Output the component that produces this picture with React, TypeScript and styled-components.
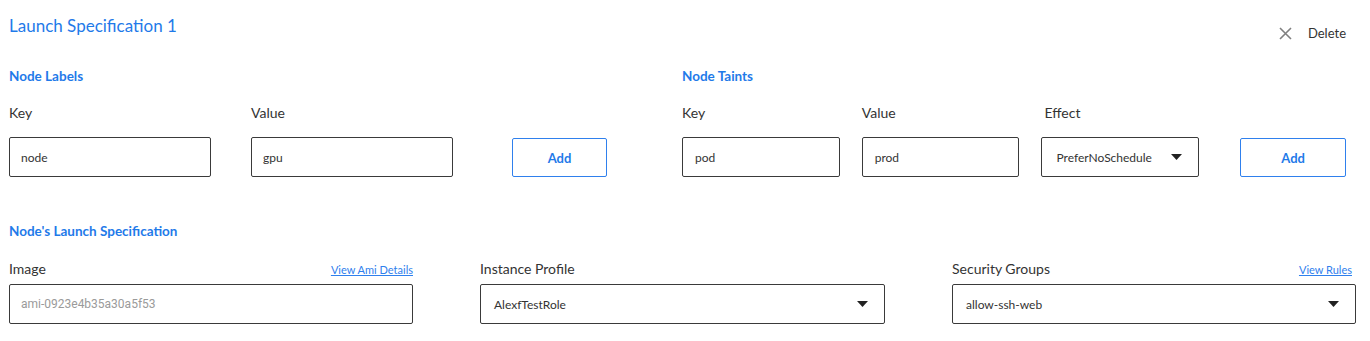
import React from 'react';
import styled, { createGlobalStyle } from 'styled-components';

const GlobalStyle = createGlobalStyle`
  body {
    margin: 0;
    background: #ffffff;
    font-family: 'Lato', 'Liberation Sans', sans-serif;
    color: #333333;
  }
`;

const Page = styled.div`
  padding: 14px 15px 0 9px;
`;

const Header = styled.div`
  display: flex;
  justify-content: space-between;
  align-items: flex-start;
  height: 38px;
  padding-right: 9px;
`;

const Title = styled.h1`
  margin: 0;
  font-size: 17px;
  line-height: 24px;
  font-weight: 400;
  color: #1f7ae9;
`;

const DeleteButton = styled.button`
  display: flex;
  align-items: center;
  gap: 16px;
  margin-top: 10px;
  padding: 0;
  border: none;
  background: none;
  font-family: inherit;
  font-size: 13px;
  line-height: 18px;
  color: #333333;
  cursor: pointer;
`;

const TopRow = styled.div`
  display: flex;
  margin-top: 16px;
`;

const Group = styled.section<{ $w: number; $ml?: number }>`
  width: ${p => p.$w}px;
  margin-left: ${p => p.$ml || 0}px;
`;

const SectionTitle = styled.h2`
  margin: 0;
  font-size: 13.5px;
  line-height: 16px;
  font-weight: 700;
  color: #1f7ae9;
`;

const Fields = styled.div<{ $gap: number }>`
  display: flex;
  align-items: flex-end;
  gap: ${p => p.$gap}px;
  margin-top: 20px;
`;

const Field = styled.div<{ $w: number }>`
  width: ${p => p.$w}px;
  display: flex;
  flex-direction: column;
`;

const LabelRow = styled.div<{ $mb: number }>`
  display: flex;
  justify-content: space-between;
  align-items: baseline;
  margin-bottom: ${p => p.$mb}px;
`;

const Label = styled.label<{ $ml?: number }>`
  margin-left: ${p => p.$ml || 0}px;
  font-size: 14px;
  line-height: 18px;
  color: #333333;
`;

const Link = styled.a<{ $mr?: number }>`
  margin-right: ${p => p.$mr || 0}px;
  font-size: 11px;
  color: #2f80ed;
  text-decoration: underline;
  cursor: pointer;
`;

const Box = styled.div<{ $muted?: boolean; $mono?: boolean; $pl?: number }>`
  box-sizing: border-box;
  height: 40px;
  border: 1px solid #3a3a3a;
  border-radius: 2px;
  display: flex;
  align-items: center;
  justify-content: space-between;
  padding: 0 16px 0 ${p => p.$pl || 11}px;
  font-size: 12px;
  color: ${p => (p.$muted ? '#9a9a9a' : '#333333')};
  font-family: ${p => (p.$mono ? "'Roboto', 'Liberation Sans', sans-serif" : 'inherit')};
`;

const AddButton = styled.button<{ $w: number; $ml: number }>`
  box-sizing: border-box;
  width: ${p => p.$w}px;
  height: 39px;
  margin-left: ${p => p.$ml}px;
  border: 1px solid #2f80ed;
  border-radius: 2px;
  background: #ffffff;
  color: #1f7ae9;
  font-family: inherit;
  font-size: 13px;
  font-weight: 700;
  cursor: pointer;
`;

const SpecSection = styled.section`
  margin-top: 46px;
`;

const SpecFields = styled.div`
  display: grid;
  grid-template-columns: 404px 405px 404px;
  column-gap: 67px;
  margin-top: 21px;
`;

const Caret = () => (
  <svg width="11" height="6" viewBox="0 0 11 6">
    <path d="M0 0 H11 L5.5 6 Z" fill="#222" />
  </svg>
);

const CloseIcon = () => (
  <svg width="13" height="13" viewBox="0 0 13 13">
    <path d="M1 1 L12 12 M12 1 L1 12" stroke="#808080" strokeWidth="1.6" />
  </svg>
);

const App: React.FC = () => (
  <>
    <GlobalStyle />
    <Page>
      <Header>
        <Title>Launch Specification 1</Title>
        <DeleteButton>
          <CloseIcon />
          Delete
        </DeleteButton>
      </Header>

      <TopRow>
        <Group $w={598}>
          <SectionTitle>Node Labels</SectionTitle>
          <Fields $gap={40}>
            <Field $w={202}>
              <LabelRow $mb={15}><Label>Key</Label></LabelRow>
              <Box>node</Box>
            </Field>
            <Field $w={202}>
              <LabelRow $mb={15}><Label>Value</Label></LabelRow>
              <Box>gpu</Box>
            </Field>
            <AddButton $w={95} $ml={19}>Add</AddButton>
          </Fields>
        </Group>

        <Group $w={664} $ml={75}>
          <SectionTitle>Node Taints</SectionTitle>
          <Fields $gap={22}>
            <Field $w={158}>
              <LabelRow $mb={15}><Label>Key</Label></LabelRow>
              <Box $pl={12}>pod</Box>
            </Field>
            <Field $w={158}>
              <LabelRow $mb={15}><Label>Value</Label></LabelRow>
              <Box $pl={12}>prod</Box>
            </Field>
            <Field $w={158}>
              <LabelRow $mb={15}><Label $ml={3}>Effect</Label></LabelRow>
              <Box $pl={14}>
                PreferNoSchedule
                <Caret />
              </Box>
            </Field>
            <AddButton $w={106} $ml={19}>Add</AddButton>
          </Fields>
        </Group>
      </TopRow>

      <SpecSection>
        <SectionTitle>Node's Launch Specification</SectionTitle>
        <SpecFields>
          <Field $w={404}>
            <LabelRow $mb={6}>
              <Label>Image</Label>
              <Link>View Ami Details</Link>
            </LabelRow>
            <Box $muted $mono>ami-0923e4b35a30a5f53</Box>
          </Field>
          <Field $w={405}>
            <LabelRow $mb={6}><Label>Instance Profile</Label></LabelRow>
            <Box $pl={13}>
              AlexfTestRole
              <Caret />
            </Box>
          </Field>
          <Field $w={404}>
            <LabelRow $mb={6}>
              <Label>Security Groups</Label>
              <Link $mr={4}>View Rules</Link>
            </LabelRow>
            <Box $pl={13}>
              allow-ssh-web
              <Caret />
            </Box>
          </Field>
        </SpecFields>
      </SpecSection>
    </Page>
  </>
);

export default App;
